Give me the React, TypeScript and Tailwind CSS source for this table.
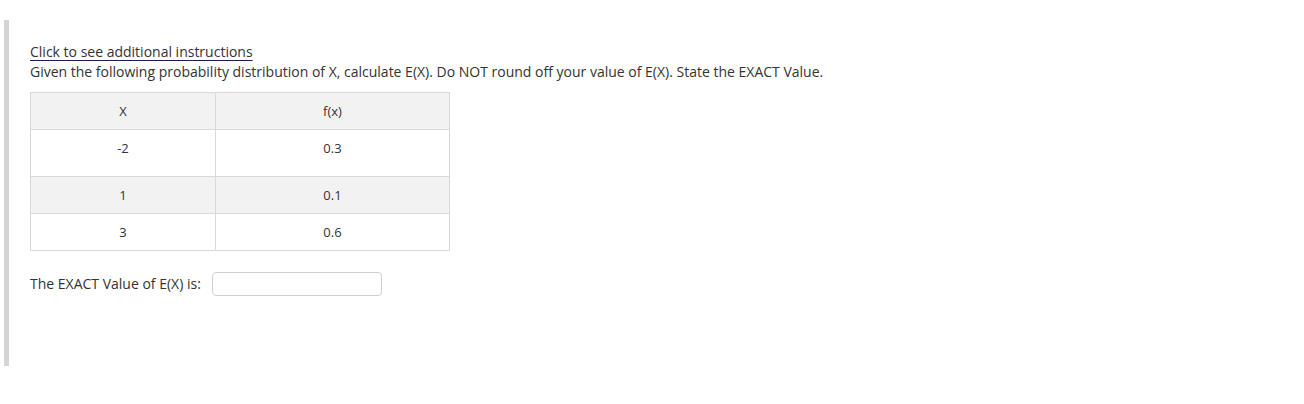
export default function App() {
  const rows = [
    { x: "-2", f: "0.3", tall: true, shade: false },
    { x: "1", f: "0.1", tall: false, shade: true },
    { x: "3", f: "0.6", tall: false, shade: false },
  ];

  return (
    <div className="h-[404px] w-[1304px] bg-white pt-[20px] pl-[4px] font-['Open_Sans',sans-serif] text-[#333]">
      <div className="h-[346px] border-l-[5px] border-[#d4d4d4] pl-[21px] pt-[21px]">
        <a
          href="#"
          className="block text-[14px] leading-[21px] text-[#333] underline decoration-[#1c1c4a] underline-offset-[3px]"
        >
          Click to see additional instructions
        </a>
        <p className="text-[14px] leading-[19px]">
          Given the following probability distribution of X, calculate E(X). Do NOT round off your value of E(X). State
          the EXACT Value.
        </p>

        <table className="mt-[11px] w-[420px] border-collapse text-[13px] leading-[18px]">
          <thead>
            <tr className="bg-[#f2f2f2]">
              <th className="h-[37px] w-[185px] border border-[#d9d9d9] text-center font-normal">X</th>
              <th className="h-[37px] border border-[#d9d9d9] text-center font-normal">f(x)</th>
            </tr>
          </thead>
          <tbody>
            {rows.map((r) => (
              <tr key={r.x} className={r.shade ? "bg-[#f2f2f2]" : "bg-white"}>
                <td
                  className={
                    r.tall
                      ? "h-[47px] border border-[#d9d9d9] pt-[9px] pb-[19px] text-center align-top"
                      : "h-[37px] border border-[#d9d9d9] text-center align-middle"
                  }
                >
                  {r.x}
                </td>
                <td
                  className={
                    r.tall
                      ? "h-[47px] border border-[#d9d9d9] pt-[9px] pb-[19px] text-center align-top"
                      : "h-[37px] border border-[#d9d9d9] text-center align-middle"
                  }
                >
                  {r.f}
                </td>
              </tr>
            ))}
          </tbody>
        </table>

        <div className="mt-[21px] flex items-center gap-[11px]">
          <label className="text-[14px] leading-[20px]">The EXACT Value of E(X) is:</label>
          <input
            type="text"
            className="h-[24px] w-[170px] rounded-[4px] border border-[#d0d0d0] bg-white px-2 text-[13px] outline-none"
          />
        </div>
      </div>
    </div>
  );
}
